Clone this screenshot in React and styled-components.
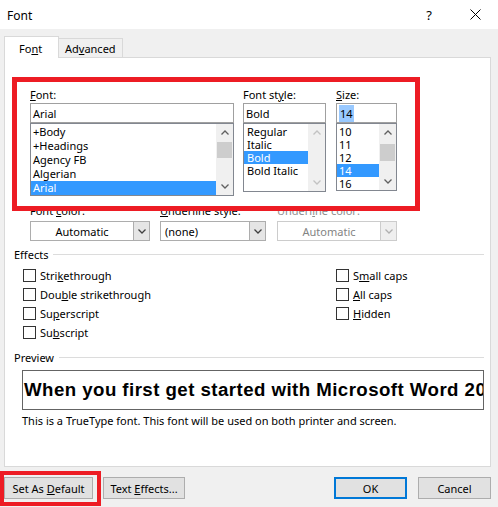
import React from "react";
import styled, { createGlobalStyle } from "styled-components";

const Global = createGlobalStyle`
  html, body { margin: 0; padding: 0; background: #f0f0f0; }
  * { box-sizing: border-box; }
`;

const UI = `"Noto Sans", "DejaVu Sans", sans-serif`;

const Dialog = styled.div`
  position: relative;
  width: 498px;
  height: 507px;
  background: #f0f0f0;
  overflow: hidden;
  font-family: ${UI};
  font-size: 11px;
  color: #000;
`;

const TitleBar = styled.div`
  height: 29px;
  background: #fff;
  display: flex;
  align-items: center;
  padding-left: 7px;
`;

const Title = styled.div`
  flex: 1;
  font-size: 12px;
  padding-top: 1px;
`;

const TitleButton = styled.div`
  width: 46px;
  height: 29px;
  display: flex;
  align-items: center;
  justify-content: center;
  font-size: 13px;
`;

const Body = styled.div`
  padding: 7px 7px 0 4px;
`;

const TabStrip = styled.div`
  display: flex;
  align-items: flex-end;
  height: 22px;
  position: relative;
  z-index: 1;
`;

const Tab = styled.div`
  width: ${(p) => p.$w}px;
  height: ${(p) => (p.$active ? 22 : 20)}px;
  background: ${(p) => (p.$active ? "#fff" : "#f0f0f0")};
  border: 1px solid #d9d9d9;
  border-left: ${(p) => (p.$active ? "1px solid #d9d9d9" : "none")};
  border-bottom: ${(p) => (p.$active ? "none" : "1px solid #d9d9d9")};
  display: flex;
  align-items: center;
  padding-left: ${(p) => p.$pad}px;
  padding-top: 1px;
`;

const Panel = styled.div`
  margin-top: -1px;
  height: 410px;
  background: #fff;
  border: 1px solid #d9d9d9;
  padding: 30px 6px 0 9px;
`;

const Key = styled.span`
  text-decoration: underline;
  text-underline-offset: 1px;
`;

const TopRow = styled.div`
  display: flex;
  margin-left: 16px;
  align-items: flex-start;
`;

const Column = styled.div`
  width: ${(p) => p.$w}px;
  margin-right: ${(p) => p.$gap || 0}px;
  display: flex;
  flex-direction: column;
`;

const Label = styled.div`
  height: 15px;
  line-height: ${(p) => p.$lh || 13}px;
  white-space: nowrap;
  color: ${(p) => (p.$disabled ? "#8d8d8d" : "#000")};
`;

const TextInput = styled.div`
  height: 20px;
  border: 1px solid #a0a0a0;
  display: flex;
  align-items: center;
  padding-left: 2px;
`;

const Selected = styled.span`
  background: #99c9ff;
  padding: 1px 1px;
`;

const List = styled.div`
  height: ${(p) => p.$h}px;
  border: 1px solid #828790;
  display: flex;
  background: #fff;
`;

const Items = styled.div`
  flex: 1;
  padding-top: ${(p) => p.$pt}px;
  overflow: hidden;
`;

const Item = styled.div`
  height: ${(p) => p.$h}px;
  line-height: ${(p) => p.$h}px;
  padding-left: ${(p) => p.$pl}px;
  white-space: nowrap;
  background: ${(p) => (p.$sel ? "#3399ff" : "transparent")};
  color: ${(p) => (p.$sel ? "#fff" : "#000")};
`;

const ScrollBar = styled.div`
  width: 17px;
  background: #f0f0f0;
  display: flex;
  flex-direction: column;
`;

const ArrowBox = styled.div`
  height: 17px;
  display: flex;
  align-items: center;
  justify-content: center;
`;

const Track = styled.div`
  flex: 1;
  display: flex;
  flex-direction: column;
  align-items: center;
`;

const Thumb = styled.div`
  width: 15px;
  background: #cdcdcd;
`;

const Chevron = ({ up, color = "#606060" }) => (
  <svg width={8} height={5} viewBox="0 0 8 5">
    {up ? (
      <polyline points="0.5,4.5 4,1 7.5,4.5" fill="none" stroke={color} strokeWidth="1.3" />
    ) : (
      <polyline points="0.5,0.5 4,4 7.5,0.5" fill="none" stroke={color} strokeWidth="1.3" />
    )}
  </svg>
);

const Scroll = ({ disabled, thumbTop, thumbH }) => {
  const c = disabled ? "#c2c2c2" : "#606060";
  return (
    <ScrollBar>
      <ArrowBox>
        <Chevron up color={c} />
      </ArrowBox>
      <Track>
        {!disabled && <Thumb style={{ marginTop: thumbTop, height: thumbH }} />}
      </Track>
      <ArrowBox>
        <Chevron color={c} />
      </ArrowBox>
    </ScrollBar>
  );
};

const ComboRow = styled.div`
  display: flex;
  margin-left: 16px;
  margin-top: 10px;
`;

const Combo = styled.div`
  height: 20px;
  border: 1px solid ${(p) => (p.$disabled ? "#cccccc" : "#adadad")};
  background: #fff;
  display: flex;
  color: ${(p) => (p.$disabled ? "#838383" : "#000")};
`;

const ComboText = styled.div`
  flex: 1;
  display: flex;
  align-items: center;
  justify-content: ${(p) => (p.$center ? "center" : "flex-start")};
  padding-left: ${(p) => (p.$center ? 0 : 4)}px;
`;

const ComboArrow = styled.div`
  width: 16px;
  background: ${(p) => (p.$disabled ? "#efefef" : "#e5e5e5")};
  border-left: 1px solid ${(p) => (p.$disabled ? "#cccccc" : "#adadad")};
  display: flex;
  align-items: center;
  justify-content: center;
`;

const GroupHeader = styled.div`
  display: flex;
  align-items: center;
  height: 15px;
  margin-top: ${(p) => p.$mt}px;
  &::after {
    content: "";
    flex: 1;
    margin-left: ${(p) => p.$gap}px;
    border-top: 1px solid #dcdcdc;
    margin-top: -1px;
  }
`;

const CheckGrid = styled.div`
  display: grid;
  grid-template-columns: 313px auto;
  grid-template-rows: repeat(4, 19px);
  margin-left: 9px;
  margin-top: 4px;
`;

const CheckRow = styled.div`
  display: flex;
  align-items: center;
  grid-column: ${(p) => p.$col};
  grid-row: ${(p) => p.$row};
`;

const Box = styled.span`
  width: 13px;
  height: 13px;
  border: 1px solid #333;
  background: #fff;
  margin-right: 4px;
`;

const PreviewBox = styled.div`
  margin: 5px 0 0 8px;
  width: 462px;
  height: 40px;
  border: 1px solid #646464;
  display: flex;
  align-items: center;
  padding-left: 1px;
  overflow: hidden;
  white-space: nowrap;
  font-family: "Liberation Sans", Arial, sans-serif;
  font-weight: bold;
  font-size: 18.67px;
  letter-spacing: 0.45px;
`;

const Note = styled.div`
  margin: 3px 0 0 8px;
  height: 15px;
  line-height: 15px;
`;

const ButtonRow = styled.div`
  display: flex;
  margin-top: 10px;
  height: 22px;
`;

const Button = styled.div`
  width: ${(p) => p.$w}px;
  height: 22px;
  margin-left: ${(p) => p.$ml || 0}px;
  background: #e1e1e1;
  border: ${(p) => (p.$primary ? "2px solid #0078d7" : "1px solid #adadad")};
  display: flex;
  align-items: center;
  justify-content: center;
`;

const Spacer = styled.div`
  flex: 1;
`;

const Highlight = styled.div`
  position: absolute;
  left: ${(p) => p.$x}px;
  top: ${(p) => p.$y}px;
  width: ${(p) => p.$w}px;
  height: ${(p) => p.$h}px;
  border: ${(p) => p.$t}px solid #ed1c24;
  pointer-events: none;
`;

const fonts = ["+Body", "+Headings", "Agency FB", "Algerian", "Arial"];
const styles = ["Regular", "Italic", "Bold", "Bold Italic"];
const sizes = ["10", "11", "12", "14", "16"];

export default function App() {
  return (
    <>
      <Global />
      <Dialog>
        <TitleBar>
          <Title>Font</Title>
          <TitleButton>?</TitleButton>
          <TitleButton>
            <svg width="11" height="11" viewBox="0 0 11 11">
              <path d="M0.5 0.5 L10.5 10.5 M10.5 0.5 L0.5 10.5" stroke="#000" strokeWidth="1" />
            </svg>
          </TitleButton>
        </TitleBar>
        <Body>
          <TabStrip>
            <Tab $active $w={55} $pad={14}>
              <span>
                Fo<Key>n</Key>t
              </span>
            </Tab>
            <Tab $w={64} $pad={6}>
              <span>
                Ad<Key>v</Key>anced
              </span>
            </Tab>
          </TabStrip>
          <Panel>
            <TopRow>
              <Column $w={204} $gap={9}>
                <Label>
                  <Key>F</Key>ont:
                </Label>
                <TextInput>Arial</TextInput>
                <List $h={73}>
                  <Items $pt={1}>
                    {fonts.map((f) => (
                      <Item key={f} $h={14} $pl={2} $sel={f === "Arial"}>
                        {f}
                      </Item>
                    ))}
                  </Items>
                  <Scroll thumbTop={1} thumbH={16} />
                </List>
              </Column>
              <Column $w={83} $gap={10}>
                <Label>
                  Font st<Key>y</Key>le:
                </Label>
                <TextInput>Bold</TextInput>
                <List $h={69}>
                  <Items $pt={1}>
                    {styles.map((s) => (
                      <Item key={s} $h={13} $pl={3} $sel={s === "Bold"}>
                        {s}
                      </Item>
                    ))}
                  </Items>
                  <Scroll disabled />
                </List>
              </Column>
              <Column $w={61}>
                <Label>
                  <Key>S</Key>ize:
                </Label>
                <TextInput>
                  <Selected>14</Selected>
                </TextInput>
                <List $h={68}>
                  <Items $pt={1}>
                    {sizes.map((s) => (
                      <Item key={s} $h={13} $pl={2} $sel={s === "14"}>
                        {s}
                      </Item>
                    ))}
                  </Items>
                  <Scroll thumbTop={3} thumbH={17} />
                </List>
              </Column>
            </TopRow>

            <ComboRow>
              <Column $w={120} $gap={10}>
                <Label $lh={10}>
                  Font <Key>c</Key>olor:
                </Label>
                <Combo>
                  <ComboText $center>Automatic</ComboText>
                  <ComboArrow>
                    <Chevron color="#404040" />
                  </ComboArrow>
                </Combo>
              </Column>
              <Column $w={106} $gap={11}>
                <Label $lh={10}>
                  <Key>U</Key>nderline style:
                </Label>
                <Combo>
                  <ComboText>(none)</ComboText>
                  <ComboArrow>
                    <Chevron color="#404040" />
                  </ComboArrow>
                </Combo>
              </Column>
              <Column $w={120}>
                <Label $lh={10} $disabled>
                  Underl<Key>i</Key>ne color:
                </Label>
                <Combo $disabled>
                  <ComboText $center>Automatic</ComboText>
                  <ComboArrow $disabled>
                    <Chevron color="#b0b0b0" />
                  </ComboArrow>
                </Combo>
              </Column>
            </ComboRow>

            <GroupHeader $mt={6} $gap={5}>Effects</GroupHeader>
            <CheckGrid>
              <CheckRow $col={1} $row={1}>
                <Box />
                <span>
                  Stri<Key>k</Key>ethrough
                </span>
              </CheckRow>
              <CheckRow $col={1} $row={2}>
                <Box />
                <span>
                  Dou<Key>b</Key>le strikethrough
                </span>
              </CheckRow>
              <CheckRow $col={1} $row={3}>
                <Box />
                <span>
                  Su<Key>p</Key>erscript
                </span>
              </CheckRow>
              <CheckRow $col={1} $row={4}>
                <Box />
                <span>
                  Su<Key>b</Key>script
                </span>
              </CheckRow>
              <CheckRow $col={2} $row={1}>
                <Box />
                <span>
                  S<Key>m</Key>all caps
                </span>
              </CheckRow>
              <CheckRow $col={2} $row={2}>
                <Box />
                <span>
                  <Key>A</Key>ll caps
                </span>
              </CheckRow>
              <CheckRow $col={2} $row={3}>
                <Box />
                <span>
                  <Key>H</Key>idden
                </span>
              </CheckRow>
            </CheckGrid>

            <GroupHeader $mt={8} $gap={5}>Preview</GroupHeader>
            <PreviewBox>When you first get started with Microsoft Word 2016</PreviewBox>
            <Note>This is a TrueType font. This font will be used on both printer and screen.</Note>
          </Panel>
          <ButtonRow>
            <Button $w={89}>
              <span>
                Set As <Key>D</Key>efault
              </span>
            </Button>
            <Button $w={82} $ml={10}>
              <span>
                Text <Key>E</Key>ffects...
              </span>
            </Button>
            <Spacer />
            <Button $w={73} $primary>
              OK
            </Button>
            <Button $w={73} $ml={11}>
              Cancel
            </Button>
          </ButtonRow>
        </Body>
        <Highlight $x={12} $y={77} $w={408} $h={134} $t={5} />
        <Highlight $x={0} $y={471} $w={101} $h={35} $t={4} />
      </Dialog>
    </>
  );
}
